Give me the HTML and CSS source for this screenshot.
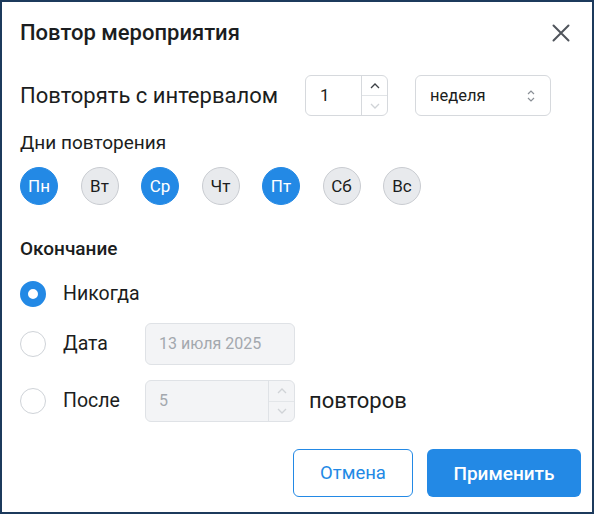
FILE: index.html
```html
<!DOCTYPE html>
<html lang="ru">
<head>
<meta charset="utf-8">
<link rel="stylesheet" href="styles.css">
</head>
<body>
<div class="dialog">
  <div class="header">
    <div class="title">Повтор мероприятия</div>
    <div class="close">
      <svg width="18" height="18" viewBox="0 0 18 18"><path d="M1.5 1.5L16.5 16.5M16.5 1.5L1.5 16.5" stroke="#50555c" stroke-width="2" stroke-linecap="round" fill="none"/></svg>
    </div>
  </div>

  <div class="interval-row">
    <div class="interval-label">Повторять с интервалом</div>
    <div class="num-input">
      <div class="num-value">1</div>
      <div class="spinner">
        <div class="spin up"><svg width="10" height="6" viewBox="0 0 10 6"><path d="M1 5L5 1L9 5" stroke="#3c4045" stroke-width="1.3" fill="none"/></svg></div>
        <div class="spin down"><svg width="10" height="6" viewBox="0 0 10 6"><path d="M1 1L5 5L9 1" stroke="#d0d3d7" stroke-width="1.3" fill="none"/></svg></div>
      </div>
    </div>
    <div class="select">
      <span>неделя</span>
      <svg width="8" height="14" viewBox="0 0 8 14"><path d="M1 5L4 2L7 5M1 9L4 12L7 9" stroke="#8a8f96" stroke-width="1.2" fill="none"/></svg>
    </div>
  </div>

  <div class="section-label">Дни повторения</div>
  <div class="days">
    <div class="day on">Пн</div>
    <div class="day">Вт</div>
    <div class="day on">Ср</div>
    <div class="day">Чт</div>
    <div class="day on">Пт</div>
    <div class="day">Сб</div>
    <div class="day">Вс</div>
  </div>

  <div class="end-title">Окончание</div>

  <div class="opt opt-never">
    <div class="radio checked"></div>
    <div class="opt-label">Никогда</div>
  </div>
  <div class="opt opt-date">
    <div class="radio"></div>
    <div class="opt-label">Дата</div>
    <div class="field date-field">13 июля 2025</div>
  </div>
  <div class="opt opt-after">
    <div class="radio"></div>
    <div class="opt-label">После</div>
    <div class="field after-field">
      <div class="after-value">5</div>
      <div class="spinner dis">
        <div class="spin up"><svg width="10" height="6" viewBox="0 0 10 6"><path d="M1 5L5 1L9 5" stroke="#d0d3d7" stroke-width="1.3" fill="none"/></svg></div>
        <div class="spin down"><svg width="10" height="6" viewBox="0 0 10 6"><path d="M1 1L5 5L9 1" stroke="#d0d3d7" stroke-width="1.3" fill="none"/></svg></div>
      </div>
    </div>
    <div class="after-text">повторов</div>
  </div>

  <div class="actions">
    <div class="btn cancel">Отмена</div>
    <div class="btn apply">Применить</div>
  </div>
</div>
</body>
</html>
```

FILE: styles.css
```css
html, body {
  margin: 0;
  padding: 0;
  background: #ffffff;
}
body {
  font-family: Roboto, "Noto Sans", "Liberation Sans", sans-serif;
  color: #1d1f22;
}
.dialog {
  box-sizing: border-box;
  width: 594px;
  height: 514px;
  border: 2px solid #1c3a5c;
  padding: 19px 11px 0 18px;
  background: #fff;
}
.header {
  display: flex;
  align-items: center;
  justify-content: space-between;
  height: 24px;
}
.title {
  font-size: 22px;
  font-weight: 500;
  line-height: 24px;
  color: #1b1d20;
}
.close {
  width: 18px;
  height: 18px;
  margin-right: 11px;
  display: flex;
}
.interval-row {
  display: flex;
  align-items: center;
  margin-top: 30px;
  height: 41px;
}
.interval-label {
  width: 285px;
  font-size: 22px;
  line-height: 26px;
  color: #1b1d20;
}
.num-input {
  box-sizing: border-box;
  width: 83px;
  height: 41px;
  border: 1px solid #d6d9dd;
  border-radius: 6px;
  display: flex;
  overflow: hidden;
}
.num-value {
  flex: 1;
  padding-left: 14px;
  font-size: 17px;
  line-height: 39px;
  color: #1b1d20;
}
.spinner {
  width: 25px;
  border-left: 1px solid #d6d9dd;
  display: flex;
  flex-direction: column;
}
.spin {
  flex: 1;
  display: flex;
  align-items: center;
  justify-content: center;
}
.spin.up {
  border-bottom: 1px solid #e1e4e7;
}
.select {
  box-sizing: border-box;
  margin-left: 27px;
  width: 136px;
  height: 41px;
  border: 1px solid #d6d9dd;
  border-radius: 6px;
  display: flex;
  align-items: center;
  justify-content: space-between;
  padding: 0 15px 0 14px;
  font-size: 16.5px;
  color: #1b1d20;
}
.section-label {
  margin-top: 16px;
  font-size: 19px;
  line-height: 22px;
  color: #1b1d20;
}
.days {
  display: flex;
  gap: 22.5px;
  margin-top: 13px;
}
.day {
  box-sizing: border-box;
  width: 38px;
  height: 38px;
  border-radius: 50%;
  background: #e8eaed;
  border: 1px solid #c9ccd1;
  display: flex;
  align-items: center;
  justify-content: center;
  font-size: 17px;
  color: #1b1d20;
}
.day.on {
  background: #2389e5;
  border-color: #2389e5;
  color: #ffffff;
}
.end-title {
  margin-top: 33px;
  font-size: 19px;
  font-weight: 500;
  line-height: 22px;
  color: #1b1d20;
}
.opt {
  display: flex;
  align-items: center;
}
.opt-never {
  margin-top: 21px;
  height: 26px;
}
.opt-date {
  margin-top: 16px;
  height: 42px;
}
.opt-after {
  margin-top: 15px;
  height: 42px;
}
.radio {
  box-sizing: border-box;
  width: 26px;
  height: 26px;
  border-radius: 50%;
  border: 1px solid #cfd3d8;
  background: #fff;
  margin-right: 17px;
}
.radio.checked {
  border: 8px solid #2389e5;
}
.opt-label {
  width: 82px;
  font-size: 19.5px;
  line-height: 24px;
  color: #1b1d20;
}
.field {
  box-sizing: border-box;
  width: 150px;
  height: 42px;
  background: #f3f4f6;
  border: 1px solid #dfe2e6;
  border-radius: 6px;
  color: #a3a8ae;
  font-size: 16px;
}
.date-field {
  padding-left: 13px;
  line-height: 40px;
}
.after-field {
  display: flex;
  overflow: hidden;
}
.after-value {
  flex: 1;
  padding-left: 13px;
  line-height: 40px;
}
.spinner.dis {
  border-left-color: #dfe2e6;
}
.spinner.dis .spin.up {
  border-bottom-color: #e3e6e9;
}
.after-text {
  margin-left: 14px;
  font-size: 22px;
  line-height: 26px;
  color: #1b1d20;
}
.actions {
  display: flex;
  justify-content: flex-end;
  gap: 14px;
  margin-top: 27px;
}
.btn {
  box-sizing: border-box;
  height: 48px;
  border-radius: 6px;
  display: flex;
  align-items: center;
  justify-content: center;
}
.cancel {
  width: 120px;
  border: 1px solid #2389e5;
  color: #2389e5;
  background: #fff;
  font-size: 18.5px;
}
.apply {
  width: 154px;
  background: #2389e5;
  color: #fff;
  font-size: 19px;
  font-weight: 500;
}
```
